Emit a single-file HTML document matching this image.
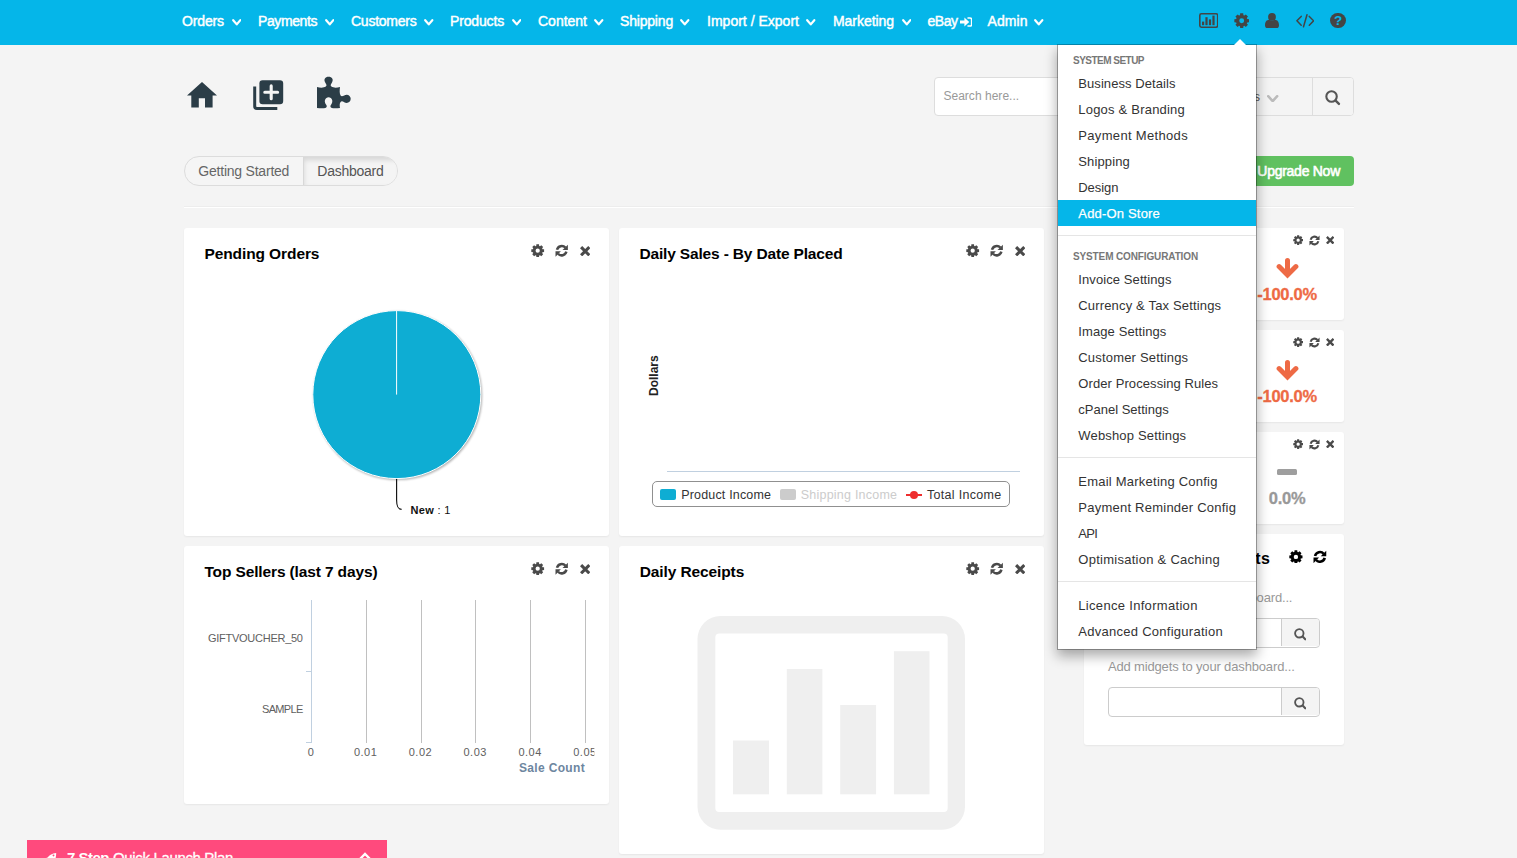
<!DOCTYPE html>
<html><head><meta charset="utf-8"><title>Dashboard</title><style>
html,body{margin:0;padding:0}
body{width:1517px;height:858px;overflow:hidden;background:#f4f4f4;position:relative;font-family:"Liberation Sans", sans-serif}
.a{position:absolute;display:block}
.t{position:absolute;display:block;white-space:nowrap;line-height:20px;font-family:"Liberation Sans", sans-serif}
.pn{background:#fff;border-radius:3px;box-shadow:0 1px 2px rgba(0,0,0,.06)}
</style></head><body>
<div class="a" style="left:0;top:0;width:1517px;height:45px;background:#05b6e9"></div>
<svg class="a" style="left:231.7px;top:19.3px" width="9.5" height="7.0" viewBox="0 0 9.5 7.0"><path d="M1.2 1.2 L4.75 5.40 L8.30 1.2" fill="none" stroke="#fff" stroke-width="2.2" stroke-linecap="round" stroke-linejoin="round"/></svg>
<svg class="a" style="left:324.7px;top:19.3px" width="9.5" height="7.0" viewBox="0 0 9.5 7.0"><path d="M1.2 1.2 L4.75 5.40 L8.30 1.2" fill="none" stroke="#fff" stroke-width="2.2" stroke-linecap="round" stroke-linejoin="round"/></svg>
<svg class="a" style="left:424.2px;top:19.3px" width="9.5" height="7.0" viewBox="0 0 9.5 7.0"><path d="M1.2 1.2 L4.75 5.40 L8.30 1.2" fill="none" stroke="#fff" stroke-width="2.2" stroke-linecap="round" stroke-linejoin="round"/></svg>
<svg class="a" style="left:511.7px;top:19.3px" width="9.5" height="7.0" viewBox="0 0 9.5 7.0"><path d="M1.2 1.2 L4.75 5.40 L8.30 1.2" fill="none" stroke="#fff" stroke-width="2.2" stroke-linecap="round" stroke-linejoin="round"/></svg>
<svg class="a" style="left:594.2px;top:19.3px" width="9.5" height="7.0" viewBox="0 0 9.5 7.0"><path d="M1.2 1.2 L4.75 5.40 L8.30 1.2" fill="none" stroke="#fff" stroke-width="2.2" stroke-linecap="round" stroke-linejoin="round"/></svg>
<svg class="a" style="left:680.2px;top:19.3px" width="9.5" height="7.0" viewBox="0 0 9.5 7.0"><path d="M1.2 1.2 L4.75 5.40 L8.30 1.2" fill="none" stroke="#fff" stroke-width="2.2" stroke-linecap="round" stroke-linejoin="round"/></svg>
<svg class="a" style="left:806.2px;top:19.3px" width="9.5" height="7.0" viewBox="0 0 9.5 7.0"><path d="M1.2 1.2 L4.75 5.40 L8.30 1.2" fill="none" stroke="#fff" stroke-width="2.2" stroke-linecap="round" stroke-linejoin="round"/></svg>
<svg class="a" style="left:901.7px;top:19.3px" width="9.5" height="7.0" viewBox="0 0 9.5 7.0"><path d="M1.2 1.2 L4.75 5.40 L8.30 1.2" fill="none" stroke="#fff" stroke-width="2.2" stroke-linecap="round" stroke-linejoin="round"/></svg>
<svg class="a" style="left:1034.2px;top:19.3px" width="9.5" height="7.0" viewBox="0 0 9.5 7.0"><path d="M1.2 1.2 L4.75 5.40 L8.30 1.2" fill="none" stroke="#fff" stroke-width="2.2" stroke-linecap="round" stroke-linejoin="round"/></svg>
<svg class="a" style="left:959.8px;top:16.6px" width="12.4" height="10" viewBox="0 0 12.4 10"><path fill="#fff" d="M0 3.4 H4.4 V0.6 L9.2 5 L4.4 9.4 V6.6 H0Z"/><path fill="none" stroke="#fff" stroke-width="1.5" stroke-linecap="round" d="M8 0.9 H10 A1.6 1.6 0 0 1 11.6 2.5 V7.5 A1.6 1.6 0 0 1 10 9.1 H8"/></svg>
<svg class="a" style="left:1198.5px;top:13px" width="19.5" height="15" viewBox="0 0 19.5 15"><rect x="0.8" y="0.8" width="17.9" height="13.4" rx="1.6" fill="none" stroke="#444" stroke-width="1.6"/><rect x="3" y="8.6" width="2.2" height="3.6" fill="#444"/><rect x="6.4" y="4.2" width="2.2" height="8" fill="#444"/><rect x="9.9" y="6.4" width="2.2" height="5.8" fill="#444"/><rect x="13.4" y="2.6" width="2.2" height="9.6" fill="#444"/></svg>
<svg class="a" style="left:1233.6px;top:12.9px" width="15.4" height="15.4" viewBox="0 0 16 16"><path fill-rule="evenodd" fill="#444" d="M6.23 2.27 L6.41 0.36 L9.59 0.36 L9.77 2.27 L10.80 2.69 L12.28 1.48 L14.52 3.72 L13.31 5.20 L13.73 6.23 L15.64 6.41 L15.64 9.59 L13.73 9.77 L13.31 10.80 L14.52 12.28 L12.28 14.52 L10.80 13.31 L9.77 13.73 L9.59 15.64 L6.41 15.64 L6.23 13.73 L5.20 13.31 L3.72 14.52 L1.48 12.28 L2.69 10.80 L2.27 9.77 L0.36 9.59 L0.36 6.41 L2.27 6.23 L2.69 5.20 L1.48 3.72 L3.72 1.48 L5.20 2.69Z M5.45 8.00 a2.55 2.55 0 1 0 5.10 0 a2.55 2.55 0 1 0 -5.10 0Z"/></svg>
<svg class="a" style="left:1265px;top:13px" width="14" height="15" viewBox="0 0 14 15"><circle cx="7" cy="3.9" r="3.9" fill="#444"/><path fill="#444" d="M0 12.4 C0 8.6 1.6 7 4.2 6.8 C5.8 8.2 8.2 8.2 9.8 6.8 C12.4 7 14 8.6 14 12.4 C14 14 13 15 11.6 15 H2.4 C1 15 0 14 0 12.4Z"/></svg>
<svg class="a" style="left:1295.5px;top:14.2px" width="18.5" height="13.5" viewBox="0 0 18.5 13.5"><path fill="none" stroke="#444" stroke-width="1.5" stroke-linecap="round" stroke-linejoin="round" d="M5.2 2.4 L0.9 6.8 L5.2 11.2 M13.3 2.4 L17.6 6.8 L13.3 11.2 M11 0.8 L7.5 12.7"/></svg>
<div class="a" style="left:1330.4px;top:12.9px;width:15.2px;height:15.2px;border-radius:50%;background:#444"></div>
<span class="t" style="left:1334px;top:10.7px;font-size:13.5px;font-weight:700;color:#05b6e9">?</span>
<svg class="a" style="left:187px;top:82px" width="30" height="26" viewBox="0 0 30 26"><path fill="#2b3d47" d="M15 0 L30 13.4 H25.6 V25.6 H18 V16.2 H11.8 V25.6 H4.3 V13.4 H0Z"/></svg>
<svg class="a" style="left:252.6px;top:79.6px" width="31" height="31" viewBox="0 0 31 31"><path fill="none" stroke="#2b3d47" stroke-width="3" stroke-linejoin="round" d="M1.7 6.4 V26.3 A2.3 2.3 0 0 0 4 28.6 H24.3"/><rect x="6.4" y="0.2" width="23.8" height="24" rx="3.2" fill="#2b3d47"/><path d="M11.8 12.3 H24.6 M18.2 5.9 V18.7" stroke="#f4f4f4" stroke-width="3.1" stroke-linecap="round"/></svg>
<svg class="a" style="left:316px;top:76px" width="36" height="33" viewBox="316 76 36 33"><path fill="#2b3d47" d="M317 87 C320 87.9 323.6 88.1 325.8 86.6 C327.2 85.4 326.2 84 325.2 82.4 C323.4 79.4 325.2 76.8 328.6 76.8 C332 76.8 333.8 79.4 332 82.4 C331 84 330 85.4 331.4 86.6 C333.6 88.1 337 87.9 340 87 C339.6 90 339.4 93.6 340.6 95.6 C341.6 96.8 342.8 96.2 344.2 95.4 C347.4 93.6 350.7 95.6 350.7 98.8 C350.7 102 347.4 104 344.2 102.2 C342.8 101.4 341.6 100.8 340.6 102 C339.4 103.6 339.6 105.6 340 107.9 C337 108.3 334 108.6 331.8 107.9 C329.8 107 330.2 105.6 331.2 104.4 C333.6 101.6 332 97.3 328.6 97.3 C325.2 97.3 323.6 101.6 326 104.4 C327 105.6 327.4 107 325.4 107.9 C323.2 108.6 320 108.3 317 107.9Z"/></svg>
<div class="a" style="left:934px;top:77px;width:420px;height:39px;box-sizing:border-box;border:1px solid #ddd;border-radius:4px;background:#fff;overflow:hidden"><div style="position:absolute;left:250px;top:0;width:127px;height:37px;background:#f4f4f4;border-left:1px solid #ddd"></div><div style="position:absolute;left:376.5px;top:0;width:42.5px;height:37px;background:#f4f4f4;border-left:1px solid #ddd"></div></div>
<svg class="a" style="left:1267.2px;top:94.6px" width="11.4" height="7.8" viewBox="0 0 11.4 7.8"><path d="M1.2 1.2 L5.70 6.20 L10.20 1.2" fill="none" stroke="#bbb" stroke-width="2.5" stroke-linecap="round" stroke-linejoin="round"/></svg>
<svg class="a" style="left:1325.4px;top:90.4px" width="15.2" height="15.2" viewBox="0 0 16 16"><circle cx="6.9" cy="6.9" r="5.5" fill="none" stroke="#555" stroke-width="2.2"/><path d="M11.2 11.2 L14.7 14.7" stroke="#555" stroke-width="2.5" stroke-linecap="round"/></svg>
<div class="a" style="left:1240px;top:156px;width:114px;height:30px;background:#60c160;border-radius:4px"></div>
<div class="a" style="left:184px;top:156px;width:214px;height:30px;box-sizing:border-box;border:1px solid #dcdcdc;border-radius:15px;overflow:hidden;background:#f5f5f5"><div style="position:absolute;left:118px;top:0;width:96px;height:28px;border-left:1px solid #d8d8d8;background:#f4f4f4;box-shadow:inset 0 3px 5px rgba(0,0,0,.125)"></div></div>
<div class="a" style="left:184px;top:206px;width:1170px;height:1px;background:#ededed"></div><div class="a" style="left:184px;top:207px;width:1170px;height:1px;background:#fff"></div>
<div class="a pn" style="left:184px;top:228px;width:425px;height:308px"></div>
<div class="a pn" style="left:619px;top:228px;width:425px;height:308px"></div>
<div class="a pn" style="left:184px;top:546px;width:425px;height:258px"></div>
<div class="a pn" style="left:619px;top:546px;width:425px;height:308px"></div>
<div class="a pn" style="left:1084px;top:228px;width:260px;height:92px"></div>
<div class="a pn" style="left:1084px;top:330px;width:260px;height:92px"></div>
<div class="a pn" style="left:1084px;top:432px;width:260px;height:92px"></div>
<div class="a pn" style="left:1084px;top:534px;width:260px;height:211px"></div>
<svg class="a" style="left:531.2px;top:243.8px" width="13.4" height="13.4" viewBox="0 0 16 16"><path fill-rule="evenodd" fill="#4a4a4a" d="M6.23 2.27 L6.41 0.36 L9.59 0.36 L9.77 2.27 L10.80 2.69 L12.28 1.48 L14.52 3.72 L13.31 5.20 L13.73 6.23 L15.64 6.41 L15.64 9.59 L13.73 9.77 L13.31 10.80 L14.52 12.28 L12.28 14.52 L10.80 13.31 L9.77 13.73 L9.59 15.64 L6.41 15.64 L6.23 13.73 L5.20 13.31 L3.72 14.52 L1.48 12.28 L2.69 10.80 L2.27 9.77 L0.36 9.59 L0.36 6.41 L2.27 6.23 L2.69 5.20 L1.48 3.72 L3.72 1.48 L5.20 2.69Z M5.45 8.00 a2.55 2.55 0 1 0 5.10 0 a2.55 2.55 0 1 0 -5.10 0Z"/></svg><svg class="a" style="left:554.8px;top:243.8px" width="13.4" height="13.4" viewBox="0 0 16 16"><path fill="none" stroke="#4a4a4a" stroke-width="3" d="M2.4 6.9 A5.8 5.8 0 0 1 12.4 4.4"/><path fill="#4a4a4a" d="M15.4 0.8 L15.4 7.2 L9 7.2Z"/><path fill="none" stroke="#4a4a4a" stroke-width="3" d="M13.6 9.1 A5.8 5.8 0 0 1 3.6 11.6"/><path fill="#4a4a4a" d="M0.6 15.2 L0.6 8.8 L7 8.8Z"/></svg><svg class="a" style="left:579.8px;top:245.7px" width="10.4" height="10.4" viewBox="0 0 12 12"><path fill="none" stroke="#4a4a4a" stroke-width="3.5" stroke-linecap="square" d="M2.5 2.5 L9.5 9.5 M9.5 2.5 L2.5 9.5"/></svg>
<svg class="a" style="left:966.2px;top:243.8px" width="13.4" height="13.4" viewBox="0 0 16 16"><path fill-rule="evenodd" fill="#4a4a4a" d="M6.23 2.27 L6.41 0.36 L9.59 0.36 L9.77 2.27 L10.80 2.69 L12.28 1.48 L14.52 3.72 L13.31 5.20 L13.73 6.23 L15.64 6.41 L15.64 9.59 L13.73 9.77 L13.31 10.80 L14.52 12.28 L12.28 14.52 L10.80 13.31 L9.77 13.73 L9.59 15.64 L6.41 15.64 L6.23 13.73 L5.20 13.31 L3.72 14.52 L1.48 12.28 L2.69 10.80 L2.27 9.77 L0.36 9.59 L0.36 6.41 L2.27 6.23 L2.69 5.20 L1.48 3.72 L3.72 1.48 L5.20 2.69Z M5.45 8.00 a2.55 2.55 0 1 0 5.10 0 a2.55 2.55 0 1 0 -5.10 0Z"/></svg><svg class="a" style="left:989.8px;top:243.8px" width="13.4" height="13.4" viewBox="0 0 16 16"><path fill="none" stroke="#4a4a4a" stroke-width="3" d="M2.4 6.9 A5.8 5.8 0 0 1 12.4 4.4"/><path fill="#4a4a4a" d="M15.4 0.8 L15.4 7.2 L9 7.2Z"/><path fill="none" stroke="#4a4a4a" stroke-width="3" d="M13.6 9.1 A5.8 5.8 0 0 1 3.6 11.6"/><path fill="#4a4a4a" d="M0.6 15.2 L0.6 8.8 L7 8.8Z"/></svg><svg class="a" style="left:1014.8px;top:245.7px" width="10.4" height="10.4" viewBox="0 0 12 12"><path fill="none" stroke="#4a4a4a" stroke-width="3.5" stroke-linecap="square" d="M2.5 2.5 L9.5 9.5 M9.5 2.5 L2.5 9.5"/></svg>
<svg class="a" style="left:531.2px;top:561.8px" width="13.4" height="13.4" viewBox="0 0 16 16"><path fill-rule="evenodd" fill="#4a4a4a" d="M6.23 2.27 L6.41 0.36 L9.59 0.36 L9.77 2.27 L10.80 2.69 L12.28 1.48 L14.52 3.72 L13.31 5.20 L13.73 6.23 L15.64 6.41 L15.64 9.59 L13.73 9.77 L13.31 10.80 L14.52 12.28 L12.28 14.52 L10.80 13.31 L9.77 13.73 L9.59 15.64 L6.41 15.64 L6.23 13.73 L5.20 13.31 L3.72 14.52 L1.48 12.28 L2.69 10.80 L2.27 9.77 L0.36 9.59 L0.36 6.41 L2.27 6.23 L2.69 5.20 L1.48 3.72 L3.72 1.48 L5.20 2.69Z M5.45 8.00 a2.55 2.55 0 1 0 5.10 0 a2.55 2.55 0 1 0 -5.10 0Z"/></svg><svg class="a" style="left:554.8px;top:561.8px" width="13.4" height="13.4" viewBox="0 0 16 16"><path fill="none" stroke="#4a4a4a" stroke-width="3" d="M2.4 6.9 A5.8 5.8 0 0 1 12.4 4.4"/><path fill="#4a4a4a" d="M15.4 0.8 L15.4 7.2 L9 7.2Z"/><path fill="none" stroke="#4a4a4a" stroke-width="3" d="M13.6 9.1 A5.8 5.8 0 0 1 3.6 11.6"/><path fill="#4a4a4a" d="M0.6 15.2 L0.6 8.8 L7 8.8Z"/></svg><svg class="a" style="left:579.8px;top:563.7px" width="10.4" height="10.4" viewBox="0 0 12 12"><path fill="none" stroke="#4a4a4a" stroke-width="3.5" stroke-linecap="square" d="M2.5 2.5 L9.5 9.5 M9.5 2.5 L2.5 9.5"/></svg>
<svg class="a" style="left:966.2px;top:561.8px" width="13.4" height="13.4" viewBox="0 0 16 16"><path fill-rule="evenodd" fill="#4a4a4a" d="M6.23 2.27 L6.41 0.36 L9.59 0.36 L9.77 2.27 L10.80 2.69 L12.28 1.48 L14.52 3.72 L13.31 5.20 L13.73 6.23 L15.64 6.41 L15.64 9.59 L13.73 9.77 L13.31 10.80 L14.52 12.28 L12.28 14.52 L10.80 13.31 L9.77 13.73 L9.59 15.64 L6.41 15.64 L6.23 13.73 L5.20 13.31 L3.72 14.52 L1.48 12.28 L2.69 10.80 L2.27 9.77 L0.36 9.59 L0.36 6.41 L2.27 6.23 L2.69 5.20 L1.48 3.72 L3.72 1.48 L5.20 2.69Z M5.45 8.00 a2.55 2.55 0 1 0 5.10 0 a2.55 2.55 0 1 0 -5.10 0Z"/></svg><svg class="a" style="left:989.8px;top:561.8px" width="13.4" height="13.4" viewBox="0 0 16 16"><path fill="none" stroke="#4a4a4a" stroke-width="3" d="M2.4 6.9 A5.8 5.8 0 0 1 12.4 4.4"/><path fill="#4a4a4a" d="M15.4 0.8 L15.4 7.2 L9 7.2Z"/><path fill="none" stroke="#4a4a4a" stroke-width="3" d="M13.6 9.1 A5.8 5.8 0 0 1 3.6 11.6"/><path fill="#4a4a4a" d="M0.6 15.2 L0.6 8.8 L7 8.8Z"/></svg><svg class="a" style="left:1014.8px;top:563.7px" width="10.4" height="10.4" viewBox="0 0 12 12"><path fill="none" stroke="#4a4a4a" stroke-width="3.5" stroke-linecap="square" d="M2.5 2.5 L9.5 9.5 M9.5 2.5 L2.5 9.5"/></svg>
<svg class="a" style="left:1293.0px;top:234.7px" width="10.3" height="10.3" viewBox="0 0 16 16"><path fill-rule="evenodd" fill="#4a4a4a" d="M6.23 2.27 L6.41 0.36 L9.59 0.36 L9.77 2.27 L10.80 2.69 L12.28 1.48 L14.52 3.72 L13.31 5.20 L13.73 6.23 L15.64 6.41 L15.64 9.59 L13.73 9.77 L13.31 10.80 L14.52 12.28 L12.28 14.52 L10.80 13.31 L9.77 13.73 L9.59 15.64 L6.41 15.64 L6.23 13.73 L5.20 13.31 L3.72 14.52 L1.48 12.28 L2.69 10.80 L2.27 9.77 L0.36 9.59 L0.36 6.41 L2.27 6.23 L2.69 5.20 L1.48 3.72 L3.72 1.48 L5.20 2.69Z M5.45 8.00 a2.55 2.55 0 1 0 5.10 0 a2.55 2.55 0 1 0 -5.10 0Z"/></svg><svg class="a" style="left:1308.9px;top:234.5px" width="11.0" height="11.0" viewBox="0 0 16 16"><path fill="none" stroke="#4a4a4a" stroke-width="3" d="M2.4 6.9 A5.8 5.8 0 0 1 12.4 4.4"/><path fill="#4a4a4a" d="M15.4 0.8 L15.4 7.2 L9 7.2Z"/><path fill="none" stroke="#4a4a4a" stroke-width="3" d="M13.6 9.1 A5.8 5.8 0 0 1 3.6 11.6"/><path fill="#4a4a4a" d="M0.6 15.2 L0.6 8.8 L7 8.8Z"/></svg><svg class="a" style="left:1326.0px;top:236.0px" width="8.4" height="8.4" viewBox="0 0 12 12"><path fill="none" stroke="#4a4a4a" stroke-width="3.5" stroke-linecap="square" d="M2.5 2.5 L9.5 9.5 M9.5 2.5 L2.5 9.5"/></svg>
<svg class="a" style="left:1293.0px;top:336.7px" width="10.3" height="10.3" viewBox="0 0 16 16"><path fill-rule="evenodd" fill="#4a4a4a" d="M6.23 2.27 L6.41 0.36 L9.59 0.36 L9.77 2.27 L10.80 2.69 L12.28 1.48 L14.52 3.72 L13.31 5.20 L13.73 6.23 L15.64 6.41 L15.64 9.59 L13.73 9.77 L13.31 10.80 L14.52 12.28 L12.28 14.52 L10.80 13.31 L9.77 13.73 L9.59 15.64 L6.41 15.64 L6.23 13.73 L5.20 13.31 L3.72 14.52 L1.48 12.28 L2.69 10.80 L2.27 9.77 L0.36 9.59 L0.36 6.41 L2.27 6.23 L2.69 5.20 L1.48 3.72 L3.72 1.48 L5.20 2.69Z M5.45 8.00 a2.55 2.55 0 1 0 5.10 0 a2.55 2.55 0 1 0 -5.10 0Z"/></svg><svg class="a" style="left:1308.9px;top:336.5px" width="11.0" height="11.0" viewBox="0 0 16 16"><path fill="none" stroke="#4a4a4a" stroke-width="3" d="M2.4 6.9 A5.8 5.8 0 0 1 12.4 4.4"/><path fill="#4a4a4a" d="M15.4 0.8 L15.4 7.2 L9 7.2Z"/><path fill="none" stroke="#4a4a4a" stroke-width="3" d="M13.6 9.1 A5.8 5.8 0 0 1 3.6 11.6"/><path fill="#4a4a4a" d="M0.6 15.2 L0.6 8.8 L7 8.8Z"/></svg><svg class="a" style="left:1326.0px;top:338.0px" width="8.4" height="8.4" viewBox="0 0 12 12"><path fill="none" stroke="#4a4a4a" stroke-width="3.5" stroke-linecap="square" d="M2.5 2.5 L9.5 9.5 M9.5 2.5 L2.5 9.5"/></svg>
<svg class="a" style="left:1293.0px;top:438.7px" width="10.3" height="10.3" viewBox="0 0 16 16"><path fill-rule="evenodd" fill="#4a4a4a" d="M6.23 2.27 L6.41 0.36 L9.59 0.36 L9.77 2.27 L10.80 2.69 L12.28 1.48 L14.52 3.72 L13.31 5.20 L13.73 6.23 L15.64 6.41 L15.64 9.59 L13.73 9.77 L13.31 10.80 L14.52 12.28 L12.28 14.52 L10.80 13.31 L9.77 13.73 L9.59 15.64 L6.41 15.64 L6.23 13.73 L5.20 13.31 L3.72 14.52 L1.48 12.28 L2.69 10.80 L2.27 9.77 L0.36 9.59 L0.36 6.41 L2.27 6.23 L2.69 5.20 L1.48 3.72 L3.72 1.48 L5.20 2.69Z M5.45 8.00 a2.55 2.55 0 1 0 5.10 0 a2.55 2.55 0 1 0 -5.10 0Z"/></svg><svg class="a" style="left:1308.9px;top:438.5px" width="11.0" height="11.0" viewBox="0 0 16 16"><path fill="none" stroke="#4a4a4a" stroke-width="3" d="M2.4 6.9 A5.8 5.8 0 0 1 12.4 4.4"/><path fill="#4a4a4a" d="M15.4 0.8 L15.4 7.2 L9 7.2Z"/><path fill="none" stroke="#4a4a4a" stroke-width="3" d="M13.6 9.1 A5.8 5.8 0 0 1 3.6 11.6"/><path fill="#4a4a4a" d="M0.6 15.2 L0.6 8.8 L7 8.8Z"/></svg><svg class="a" style="left:1326.0px;top:440.0px" width="8.4" height="8.4" viewBox="0 0 12 12"><path fill="none" stroke="#4a4a4a" stroke-width="3.5" stroke-linecap="square" d="M2.5 2.5 L9.5 9.5 M9.5 2.5 L2.5 9.5"/></svg>
<svg class="a" style="left:1275.7px;top:258.4px" width="23" height="21" viewBox="0 0 23 21"><path fill="none" stroke="#ee6a45" stroke-width="5" stroke-linecap="round" stroke-linejoin="miter" d="M11.5 2.6 L11.5 15 M3.1 8.6 L11.5 17 L19.9 8.6"/></svg>
<svg class="a" style="left:1275.7px;top:360.4px" width="23" height="21" viewBox="0 0 23 21"><path fill="none" stroke="#ee6a45" stroke-width="5" stroke-linecap="round" stroke-linejoin="miter" d="M11.5 2.6 L11.5 15 M3.1 8.6 L11.5 17 L19.9 8.6"/></svg>
<div class="a" style="left:1277px;top:469px;width:20px;height:5.5px;border-radius:1.5px;background:#9e9e9e"></div>
<svg class="a" style="left:1289.0px;top:549.6px" width="13.8" height="13.8" viewBox="0 0 16 16"><path fill-rule="evenodd" fill="#000" d="M6.23 2.27 L6.41 0.36 L9.59 0.36 L9.77 2.27 L10.80 2.69 L12.28 1.48 L14.52 3.72 L13.31 5.20 L13.73 6.23 L15.64 6.41 L15.64 9.59 L13.73 9.77 L13.31 10.80 L14.52 12.28 L12.28 14.52 L10.80 13.31 L9.77 13.73 L9.59 15.64 L6.41 15.64 L6.23 13.73 L5.20 13.31 L3.72 14.52 L1.48 12.28 L2.69 10.80 L2.27 9.77 L0.36 9.59 L0.36 6.41 L2.27 6.23 L2.69 5.20 L1.48 3.72 L3.72 1.48 L5.20 2.69Z M5.45 8.00 a2.55 2.55 0 1 0 5.10 0 a2.55 2.55 0 1 0 -5.10 0Z"/></svg><svg class="a" style="left:1313.0px;top:549.6px" width="13.8" height="13.8" viewBox="0 0 16 16"><path fill="none" stroke="#000" stroke-width="3" d="M2.4 6.9 A5.8 5.8 0 0 1 12.4 4.4"/><path fill="#000" d="M15.4 0.8 L15.4 7.2 L9 7.2Z"/><path fill="none" stroke="#000" stroke-width="3" d="M13.6 9.1 A5.8 5.8 0 0 1 3.6 11.6"/><path fill="#000" d="M0.6 15.2 L0.6 8.8 L7 8.8Z"/></svg>
<div class="a" style="left:1107.5px;top:618px;width:212.5px;height:29.5px;box-sizing:border-box;border:1px solid #ccc;border-radius:4px;background:#fff;overflow:hidden"><div style="position:absolute;left:172px;top:0;width:39px;height:27px;background:#f4f4f4;border-left:1px solid #ccc"></div></div>
<svg class="a" style="left:1294.2px;top:628.4px" width="12.3" height="12.3" viewBox="0 0 16 16"><circle cx="6.9" cy="6.9" r="5.5" fill="none" stroke="#555" stroke-width="2.4"/><path d="M11.2 11.2 L14.7 14.7" stroke="#555" stroke-width="2.8" stroke-linecap="round"/></svg>
<div class="a" style="left:1107.5px;top:687px;width:212.5px;height:29.5px;box-sizing:border-box;border:1px solid #ccc;border-radius:4px;background:#fff;overflow:hidden"><div style="position:absolute;left:172px;top:0;width:39px;height:27px;background:#f4f4f4;border-left:1px solid #ccc"></div></div>
<svg class="a" style="left:1294.2px;top:697.4px" width="12.3" height="12.3" viewBox="0 0 16 16"><circle cx="6.9" cy="6.9" r="5.5" fill="none" stroke="#555" stroke-width="2.4"/><path d="M11.2 11.2 L14.7 14.7" stroke="#555" stroke-width="2.8" stroke-linecap="round"/></svg>
<svg class="a" style="left:300px;top:300px" width="200" height="230" viewBox="300 300 200 230"><defs><filter id="sh" x="-10%" y="-10%" width="120%" height="120%"><feGaussianBlur stdDeviation="1.2"/></filter></defs><circle cx="397.8" cy="395.7" r="84.4" fill="#000" opacity=".3" filter="url(#sh)"/><circle cx="396.8" cy="394.6" r="84" fill="#0eadd3" stroke="#fff" stroke-width="1"/><path d="M396.6 310.6 V394.6" stroke="#fff" stroke-width="1"/><path d="M396.6 479 V500 C396.6 507 398 509.2 401.6 509.4" fill="none" stroke="#111" stroke-width="1.15"/></svg>
<div class="a" style="left:667px;top:470.7px;width:353px;height:1px;background:#c0d0e0"></div>
<div class="a" style="left:652px;top:481px;width:358px;height:26px;box-sizing:border-box;border:1px solid #909090;border-radius:5px;background:#fff"></div>
<div class="a" style="left:660px;top:488.6px;width:16px;height:11.4px;border-radius:2px;background:#0eadd3"></div>
<div class="a" style="left:779.8px;top:488.6px;width:16px;height:11.4px;border-radius:2px;background:#ccc"></div>
<div class="a" style="left:905.5px;top:494px;width:16px;height:2px;background:#ee2e2e"></div><div class="a" style="left:909.5px;top:491px;width:8px;height:8px;border-radius:50%;background:#ee2e2e"></div>
<span id="dol" class="t" style="left:634px;top:365.5px;width:40px;text-align:center;font-size:12px;font-weight:700;color:#222;transform:rotate(-90deg);transform-origin:50% 50%">Dollars</span>
<div class="a" style="left:311px;top:600px;width:1px;height:142.5px;background:#c0d0e0"></div>
<div class="a" style="left:366.2px;top:600px;width:1px;height:142.5px;background:#c0c0c0"></div>
<div class="a" style="left:421.2px;top:600px;width:1px;height:142.5px;background:#c0c0c0"></div>
<div class="a" style="left:475.1px;top:600px;width:1px;height:142.5px;background:#c0c0c0"></div>
<div class="a" style="left:530.1px;top:600px;width:1px;height:142.5px;background:#c0c0c0"></div>
<div class="a" style="left:585.2px;top:600px;width:1px;height:142.5px;background:#c0c0c0"></div>
<div class="a" style="left:306.3px;top:671px;width:5px;height:1px;background:#c0d0e0"></div>
<div class="a" style="left:306.3px;top:742px;width:5px;height:1px;background:#c0d0e0"></div>
<svg class="a" style="left:697px;top:615px" width="269" height="216" viewBox="697 615 269 216"><rect x="697.5" y="616" width="267.5" height="213.8" rx="23" fill="#efefef"/><rect x="715.3" y="633.4" width="232.4" height="178.6" rx="4" fill="#fff"/><rect x="733" y="740.5" width="36" height="53.8" fill="#efefef"/><rect x="786.8" y="669" width="35.6" height="125.3" fill="#efefef"/><rect x="840.2" y="705" width="35.9" height="89.3" fill="#efefef"/><rect x="893.9" y="651.2" width="35.6" height="143.1" fill="#efefef"/></svg>
<div class="a" style="left:27px;top:840px;width:360px;height:30px;background:#ff4a7d"></div>
<svg class="a" style="left:357.5px;top:852.2px" width="14" height="8" viewBox="0 0 14 8"><path d="M1.5 7.5 L7 2 L12.5 7.5" fill="none" stroke="#fff" stroke-width="2.3" stroke-linejoin="miter"/></svg>
<svg class="a" style="left:44px;top:852px" width="14" height="8" viewBox="44 852 14 8"><path fill-rule="evenodd" d="M56.2 853 C52 853.2 49.6 855 47.6 857.6 L44.6 858.4 V860 H55.2 C55.8 857.6 56.2 855.4 56.2 853Z M53.5 854.5 a0.9 0.9 0 1 0 0.01 0Z" fill="#fff"/></svg>
<span id="n0" class="t" style="left:182.0px;top:11.1px;font-size:14px;font-weight:400;color:#fff;letter-spacing:-0.133px;-webkit-text-stroke:0.45px #fff;">Orders</span>
<span id="n1" class="t" style="left:258.0px;top:11.1px;font-size:14px;font-weight:400;color:#fff;letter-spacing:-0.406px;-webkit-text-stroke:0.45px #fff;">Payments</span>
<span id="n2" class="t" style="left:351.0px;top:11.1px;font-size:14px;font-weight:400;color:#fff;letter-spacing:-0.243px;-webkit-text-stroke:0.45px #fff;">Customers</span>
<span id="n3" class="t" style="left:450.0px;top:11.1px;font-size:14px;font-weight:400;color:#fff;letter-spacing:-0.156px;-webkit-text-stroke:0.45px #fff;">Products</span>
<span id="n4" class="t" style="left:538.0px;top:11.1px;font-size:14px;font-weight:400;color:#fff;letter-spacing:-0.007px;-webkit-text-stroke:0.45px #fff;">Content</span>
<span id="n5" class="t" style="left:620.0px;top:11.1px;font-size:14px;font-weight:400;color:#fff;letter-spacing:-0.188px;-webkit-text-stroke:0.45px #fff;">Shipping</span>
<span id="n6" class="t" style="left:707.0px;top:11.1px;font-size:14px;font-weight:400;color:#fff;letter-spacing:0.013px;-webkit-text-stroke:0.45px #fff;">Import / Export</span>
<span id="n7" class="t" style="left:833.0px;top:11.1px;font-size:14px;font-weight:400;color:#fff;letter-spacing:-0.052px;-webkit-text-stroke:0.45px #fff;">Marketing</span>
<span id="n8" class="t" style="left:927.5px;top:11.1px;font-size:14px;font-weight:400;color:#fff;letter-spacing:-0.480px;-webkit-text-stroke:0.45px #fff;">eBay</span>
<span id="n9" class="t" style="left:987.5px;top:11.1px;font-size:14px;font-weight:400;color:#fff;letter-spacing:0.062px;-webkit-text-stroke:0.45px #fff;">Admin</span>
<span id="srch" class="t" style="left:943.4px;top:86.0px;font-size:12px;font-weight:400;color:#999;letter-spacing:0.030px;">Search here...</span>
<span id="upg" class="t" style="left:1257.3px;top:161.1px;font-size:14px;font-weight:400;color:#fff;letter-spacing:-0.264px;-webkit-text-stroke:0.6px #fff;">Upgrade Now</span>
<span id="tab1" class="t" style="left:198.3px;top:161.1px;font-size:14px;font-weight:400;color:#666;letter-spacing:-0.218px;">Getting Started</span>
<span id="tab2" class="t" style="left:317.3px;top:161.1px;font-size:14px;font-weight:400;color:#555;letter-spacing:-0.256px;">Dashboard</span>
<span id="p1" class="t" style="left:204.4px;top:244.0px;font-size:15.5px;font-weight:700;color:#000;letter-spacing:-0.092px;">Pending Orders</span>
<span id="p2" class="t" style="left:639.5px;top:244.0px;font-size:15.5px;font-weight:700;color:#000;letter-spacing:-0.166px;">Daily Sales - By Date Placed</span>
<span id="p3" class="t" style="left:204.4px;top:562.0px;font-size:15.5px;font-weight:700;color:#000;letter-spacing:-0.129px;">Top Sellers (last 7 days)</span>
<span id="p4" class="t" style="left:639.7px;top:562.0px;font-size:15.5px;font-weight:700;color:#000;letter-spacing:-0.105px;">Daily Receipts</span>
<span id="new" class="t" style="left:410.5px;top:500.0px;font-size:11px;font-weight:400;color:#111;letter-spacing:0.325px;"><b>New</b> : 1</span>
<span id="li1" class="t" style="left:681.2px;top:485.0px;font-size:12.5px;font-weight:400;color:#333;letter-spacing:0.175px;">Product Income</span>
<span id="li2" class="t" style="left:800.8px;top:485.0px;font-size:12.5px;font-weight:400;color:#ccc;letter-spacing:0.218px;">Shipping Income</span>
<span id="li3" class="t" style="left:927.0px;top:485.0px;font-size:12.5px;font-weight:400;color:#333;letter-spacing:0.302px;">Total Income</span>
<span id="y1" class="t" style="left:208.0px;top:628.0px;font-size:11px;font-weight:400;color:#606060;letter-spacing:-0.266px;">GIFTVOUCHER_50</span>
<span id="y2" class="t" style="left:262.0px;top:699.0px;font-size:11px;font-weight:400;color:#606060;letter-spacing:-0.657px;">SAMPLE</span>
<span id="x0" class="t" style="left:307.8px;top:742.0px;font-size:11px;font-weight:400;color:#606060;letter-spacing:0.275px;">0</span>
<span id="x1" class="t" style="left:353.9px;top:742.0px;font-size:11px;font-weight:400;color:#606060;letter-spacing:0.520px;">0.01</span>
<span id="x2" class="t" style="left:408.7px;top:742.0px;font-size:11px;font-weight:400;color:#606060;letter-spacing:0.520px;">0.02</span>
<span id="x3" class="t" style="left:463.5px;top:742.0px;font-size:11px;font-weight:400;color:#606060;letter-spacing:0.495px;">0.03</span>
<span id="x4" class="t" style="left:518.4px;top:742.0px;font-size:11px;font-weight:400;color:#606060;letter-spacing:0.520px;">0.04</span>
<span id="x5" class="t" style="left:573.2px;top:742.0px;font-size:11px;font-weight:400;color:#606060;letter-spacing:0.520px;clip-path:inset(0 2.3px 0 0);">0.05</span>
<span id="sc" class="t" style="left:518.9px;top:758.1px;font-size:12px;font-weight:700;color:#6d869f;letter-spacing:0.343px;">Sale Count</span>
<span id="pc1" class="t" style="left:1257.2px;top:284.0px;font-size:16.5px;font-weight:700;color:#ee6a45;letter-spacing:-0.238px;-webkit-text-stroke:0.3px #ee6a45;">-100.0%</span>
<span id="pc2" class="t" style="left:1257.2px;top:386.0px;font-size:16.5px;font-weight:700;color:#ee6a45;letter-spacing:-0.238px;-webkit-text-stroke:0.3px #ee6a45;">-100.0%</span>
<span id="pc3" class="t" style="left:1268.8px;top:488.0px;font-size:16.5px;font-weight:700;color:#999;letter-spacing:-0.252px;-webkit-text-stroke:0.3px #999;">0.0%</span>
<span id="wt" class="t" style="left:1170.0px;top:549.0px;font-size:16px;font-weight:700;color:#000;letter-spacing:0.216px;">Add Widgets</span>
<span id="aw1" class="t" style="left:1107.7px;top:588.0px;font-size:13px;font-weight:400;color:#999;letter-spacing:-0.171px;">Add widgets to your dashboard...</span>
<span id="aw2" class="t" style="left:1107.9px;top:657.0px;font-size:13px;font-weight:400;color:#999;letter-spacing:-0.150px;">Add midgets to your dashboard...</span>
<span id="qs1" class="t" style="left:67.0px;top:848.0px;font-size:15px;font-weight:700;color:#fff;letter-spacing:-0.503px;">7 Step</span>
<span id="qs2" class="t" style="left:113.0px;top:848.0px;font-size:15px;font-weight:400;color:#fff;letter-spacing:-0.348px;-webkit-text-stroke:0.3px #fff;">Quick Launch Plan</span>
<span id="sel" class="t" style="left:1225.0px;top:87.0px;font-size:12px;font-weight:400;color:#555;letter-spacing:-0.315px;">Orders</span>
<div class="a" style="left:1057px;top:44px;width:200px;height:606px;box-sizing:border-box;border:1px solid rgba(0,0,0,.3);border-top-color:rgba(0,0,0,.22);clip-path:inset(0 -40px -40px -40px);background:#fff;background-clip:padding-box;box-shadow:0 6px 12px rgba(0,0,0,.33)"></div>
<svg class="a" style="left:1233.2px;top:38px" width="14" height="8" viewBox="0 0 14 8"><path d="M0 8 L7 1 L14 8Z" fill="#fff"/></svg>
<div class="a" style="left:1058px;top:200px;width:198px;height:26px;background:#05b6e9"></div>
<div class="a" style="left:1058px;top:235px;width:198px;height:1px;background:#e5e5e5"></div>
<div class="a" style="left:1058px;top:457px;width:198px;height:1px;background:#e5e5e5"></div>
<div class="a" style="left:1058px;top:581px;width:198px;height:1px;background:#e5e5e5"></div>
<span id="h1" class="t" style="left:1073.0px;top:51.0px;font-size:10px;font-weight:700;color:#777;letter-spacing:-0.521px;">SYSTEM SETUP</span>
<span id="a0" class="t" style="left:1078.3px;top:74.0px;font-size:13px;font-weight:400;color:#333;letter-spacing:0.068px;">Business Details</span>
<span id="a1" class="t" style="left:1078.3px;top:100.0px;font-size:13px;font-weight:400;color:#333;letter-spacing:0.209px;">Logos &amp; Branding</span>
<span id="a2" class="t" style="left:1078.3px;top:126.0px;font-size:13px;font-weight:400;color:#333;letter-spacing:0.328px;">Payment Methods</span>
<span id="a3" class="t" style="left:1078.3px;top:152.0px;font-size:13px;font-weight:400;color:#333;letter-spacing:0.136px;">Shipping</span>
<span id="a4" class="t" style="left:1078.3px;top:178.0px;font-size:13px;font-weight:400;color:#333;letter-spacing:-0.061px;">Design</span>
<span id="a5" class="t" style="left:1078.3px;top:204.0px;font-size:13px;font-weight:400;color:#fff;letter-spacing:0.183px;-webkit-text-stroke:0.25px #fff;">Add-On Store</span>
<span id="h2" class="t" style="left:1073.0px;top:247.0px;font-size:10px;font-weight:700;color:#777;letter-spacing:-0.130px;">SYSTEM CONFIGURATION</span>
<span id="b0" class="t" style="left:1078.3px;top:270.0px;font-size:13px;font-weight:400;color:#333;letter-spacing:0.089px;">Invoice Settings</span>
<span id="b1" class="t" style="left:1078.3px;top:296.0px;font-size:13px;font-weight:400;color:#333;letter-spacing:0.164px;">Currency &amp; Tax Settings</span>
<span id="b2" class="t" style="left:1078.3px;top:322.0px;font-size:13px;font-weight:400;color:#333;letter-spacing:0.099px;">Image Settings</span>
<span id="b3" class="t" style="left:1078.3px;top:348.0px;font-size:13px;font-weight:400;color:#333;letter-spacing:0.180px;">Customer Settings</span>
<span id="b4" class="t" style="left:1078.3px;top:374.0px;font-size:13px;font-weight:400;color:#333;letter-spacing:0.086px;">Order Processing Rules</span>
<span id="b5" class="t" style="left:1078.3px;top:400.0px;font-size:13px;font-weight:400;color:#333;letter-spacing:0.004px;">cPanel Settings</span>
<span id="b6" class="t" style="left:1078.3px;top:426.0px;font-size:13px;font-weight:400;color:#333;letter-spacing:0.170px;">Webshop Settings</span>
<span id="c0" class="t" style="left:1078.3px;top:472.0px;font-size:13px;font-weight:400;color:#333;letter-spacing:0.228px;">Email Marketing Config</span>
<span id="c1" class="t" style="left:1078.3px;top:498.0px;font-size:13px;font-weight:400;color:#333;letter-spacing:0.236px;">Payment Reminder Config</span>
<span id="c2" class="t" style="left:1078.3px;top:524.0px;font-size:13px;font-weight:400;color:#333;letter-spacing:-0.756px;">API</span>
<span id="c3" class="t" style="left:1078.3px;top:550.0px;font-size:13px;font-weight:400;color:#333;letter-spacing:0.266px;">Optimisation &amp; Caching</span>
<span id="d0" class="t" style="left:1078.3px;top:596.0px;font-size:13px;font-weight:400;color:#333;letter-spacing:0.313px;">Licence Information</span>
<span id="d1" class="t" style="left:1078.3px;top:622.0px;font-size:13px;font-weight:400;color:#333;letter-spacing:0.270px;">Advanced Configuration</span>
</body></html>
